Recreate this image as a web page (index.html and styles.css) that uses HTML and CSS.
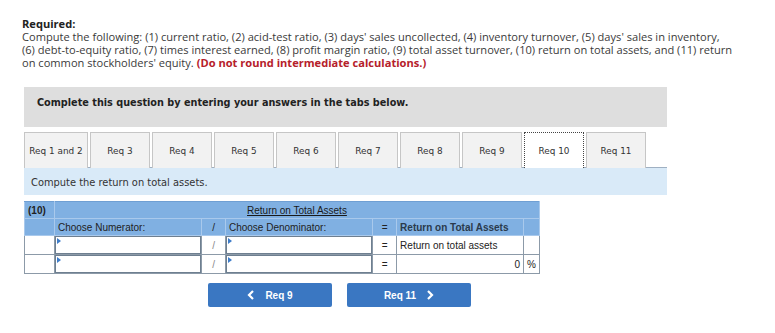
FILE: index.html
```html
<!DOCTYPE html>
<html>
<head>
<meta charset="UTF-8">
<title>Req 10</title>
<link rel="stylesheet" href="styles.css">
</head>
<body>
<div class="required">
    <div class="required-title">Required:</div>
    Compute the following: (1) current ratio, (2) acid-test ratio, (3) days' sales uncollected, (4) inventory turnover, (5) days' sales in inventory, (6) debt-to-equity ratio, (7) times interest earned, (8) profit margin ratio, (9) total asset turnover, (10) return on total assets, and (11) return on common stockholders' equity. <span class="warn">(Do not round intermediate calculations.)</span>
</div>

<div class="prompt">Complete this question by entering your answers in the tabs below.</div>

<div class="tabs">
    <div class="tab first">Req 1 and 2</div>
    <div class="tab">Req 3</div>
    <div class="tab">Req 4</div>
    <div class="tab">Req 5</div>
    <div class="tab">Req 6</div>
    <div class="tab">Req 7</div>
    <div class="tab">Req 8</div>
    <div class="tab">Req 9</div>
    <div class="tab active">Req 10</div>
    <div class="tab">Req 11</div>
</div>
<div class="instruction">Compute the return on total assets.</div>

<table class="ratio">
    <tr class="head">
        <td class="c-num"><b>(10)</b></td>
        <td colspan="6" class="title"><u>Return on Total Assets</u></td>
    </tr>
    <tr class="head">
        <td></td>
        <td>Choose Numerator:</td>
        <td class="op">/</td>
        <td>Choose Denominator:</td>
        <td class="op">=</td>
        <td class="strong">Return on Total Assets</td>
        <td></td>
    </tr>
    <tr class="row">
        <td></td>
        <td class="pick"><div class="field"></div></td>
        <td class="op light">/</td>
        <td class="pick"><div class="field"></div></td>
        <td class="op">=</td>
        <td>Return on total assets</td>
        <td></td>
    </tr>
    <tr class="row tall">
        <td></td>
        <td class="pick"><div class="field"></div></td>
        <td class="op light">/</td>
        <td class="pick"><div class="field"></div></td>
        <td class="op">=</td>
        <td class="amount">0</td>
        <td class="pct">%</td>
    </tr>
</table>

<div class="nav">
    <a class="btn" href="#">
        <svg width="8" height="10" viewBox="0 0 8 10"><path d="M6 1 L2 5 L6 9" fill="none" stroke="#fff" stroke-width="2.2"/></svg>
        <span>Req 9</span>
    </a>
    <a class="btn" href="#">
        <span>Req 11</span>
        <svg width="8" height="10" viewBox="0 0 8 10"><path d="M2 1 L6 5 L2 9" fill="none" stroke="#fff" stroke-width="2.2"/></svg>
    </a>
</div>
</body>
</html>
```

FILE: styles.css
```css
body{
    margin: 0;
    background: #fff;
    color: #333;
}
.required{
    font-family: "Open Sans", "Liberation Sans", sans-serif;
    font-size: 11.1px;
    line-height: 13px;
    color: #3a3a3a;
    padding: 17px 0 0 22px;
    width: 712px;
}
.required-title{
    font-weight: bold;
    color: #222;
}
.warn{
    color: #b5202a;
    font-weight: bold;
}
.prompt{
    margin: 18px 0 0 24px;
    width: 643px;
    height: 40px;
    box-sizing: border-box;
    padding: 10px 13px 0;
    background: #dedede;
    font-family: "DejaVu Sans", Verdana, sans-serif;
    font-size: 9.7px;
    font-weight: bold;
    color: #222;
}
.tabs{
    margin: 5px 0 0 24px;
    width: 643px;
    display: flex;
    gap: 2px;
    border-bottom: 1px solid #9fb0c2;
    height: 36px;
    box-sizing: border-box;
}
.tab{
    width: 60px;
    height: 36px;
    box-sizing: border-box;
    border: 1px solid #c6c6c6;
    border-bottom: none;
    background: #f2f2f2;
    font-family: "DejaVu Sans", Verdana, sans-serif;
    font-size: 8.9px;
    color: #333;
    display: flex;
    align-items: center;
    justify-content: center;
    padding-top: 1px;
}
.tab.first{
    width: 64px;
}
.tab.active{
    background: #fff;
    border: 1px dotted #444;
    border-bottom: none;
    margin-bottom: -1px;
    position: relative;
}
.instruction{
    margin-left: 24px;
    width: 643px;
    height: 27px;
    box-sizing: border-box;
    padding: 9px 0 0 7px;
    background: #d9eaf8;
    font-family: "DejaVu Sans", Verdana, sans-serif;
    font-size: 9.9px;
    color: #333;
}
.ratio{
    margin: 6px 0 0 24px;
    border-collapse: collapse;
    width: 516px;
    font-family: "Liberation Sans", Arial, sans-serif;
    font-size: 10px;
    color: #222;
}
.ratio td{
    padding: 0 3px;
    border: 1px solid #8c9aa8;
    white-space: nowrap;
}
.ratio .head td{
    background: #80b0e2;
    border-color: #a9c9ec;
    height: 16px;
}
.ratio .head:first-child td{
    border-top-color: #6f9fd3;
}
.ratio .c-num{
    width: 23px;
    color: #222;
}
.ratio .title{
    text-align: center;
}
.ratio .title u{
    color: #1a1a1a;
}
.ratio .strong{
    font-weight: bold;
    color: #2a3a4c;
}
.ratio .op{
    width: 17px;
    text-align: center;
}
.ratio .light{
    color: #888;
}
.ratio .row td{
    height: 17px;
    background: #fff;
}
.ratio .row.tall td{
    height: 16px;
}
.ratio td.pick{
    padding: 0;
    width: 147px;
}
.field{
    position: relative;
    height: 16px;
    border: 1px solid #6e7f90;
    background: #fff;
}
.field::before{
    content: "";
    position: absolute;
    left: 1px;
    top: 1px;
    border-left: 4px solid #3d7cc9;
    border-top: 3px solid transparent;
    border-bottom: 3px solid transparent;
}
.ratio .amount{
    text-align: right;
    width: 120px;
}
.ratio .pct{
    width: 9px;
}
.nav{
    display: flex;
    gap: 15px;
    margin: 9px 0 0 208px;
}
.btn{
    width: 124px;
    height: 24px;
    border-radius: 2px;
    background: #3a77c2;
    color: #fff;
    text-decoration: none;
    font-family: "Liberation Sans", Arial, sans-serif;
    font-size: 10px;
    font-weight: bold;
    display: flex;
    align-items: center;
    justify-content: center;
    gap: 10px;
}
```
